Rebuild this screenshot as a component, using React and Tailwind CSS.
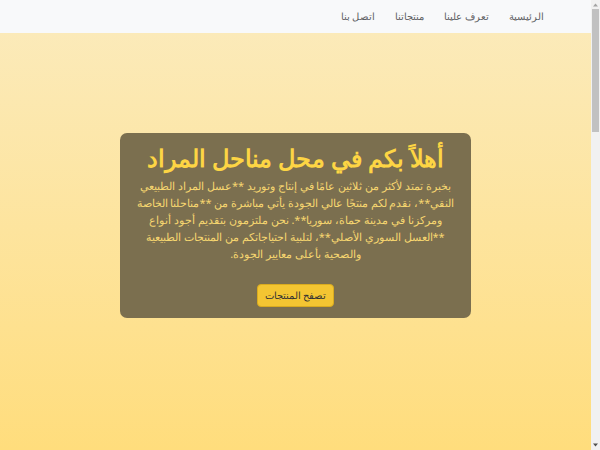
const links = ["الرئيسية", "تعرف علينا", "منتجاتنا", "اتصل بنا"];

const intro = [
  "بخبرة تمتد لأكثر من ثلاثين عامًا في إنتاج وتوريد **عسل المراد الطبيعي",
  "النقي**، نقدم لكم منتجًا عالي الجودة يأتي مباشرة من **مناحلنا الخاصة",
  "ومركزنا في مدينة حماة، سوريا**. نحن ملتزمون بتقديم أجود أنواع",
  "**العسل السوري الأصلي**، لتلبية احتياجاتكم من المنتجات الطبيعية",
  "والصحية بأعلى معايير الجودة.",
];

function Navbar() {
  return (
    <nav className="sticky top-0 z-10 h-[33px] bg-[#f8f9fa]">
      <ul className="flex h-full items-center gap-[20px] pr-[47px] text-[10px] text-[#5f6164]">
        {links.map((l) => (
          <li key={l}>
            <a href="#" className="block">{l}</a>
          </li>
        ))}
      </ul>
    </nav>
  );
}

// drawn scrollbar (the browser one is hidden in headless shots)
function Scrollbar() {
  return (
    <aside className="flex h-screen w-[9px] shrink-0 flex-col items-center bg-[#f1f1f1]">
      <svg width="7" height="8" viewBox="0 0 7 8" className="mt-[1px] shrink-0">
        <path d="M3.5 2.5 L6 5.5 L1 5.5 Z" fill="#a3a3a3" />
      </svg>
      <div className="h-[123px] w-[7px] shrink-0 bg-[#c1c1c1]" />
      <div className="flex-1" />
      <svg width="7" height="8" viewBox="0 0 7 8" className="mb-[1px] shrink-0">
        <path d="M3.5 5.5 L6 2.5 L1 2.5 Z" fill="#505050" />
      </svg>
    </aside>
  );
}

export default function App() {
  return (
    <div className="flex h-screen overflow-hidden">
      <main
        dir="rtl"
        className="h-screen flex-1 overflow-y-auto [scrollbar-width:none] font-['Noto_Sans',sans-serif]"
      >
        <Navbar />

        {/* Hero */}
        <section className="-mt-[33px] flex h-screen items-center justify-center bg-gradient-to-b from-[#fbebbd] to-[#ffdd7c]">
          <div className="w-[351px] rounded-[7px] bg-[#7b6f4f] px-[16px] pt-[7px] pb-[11px] text-center">
            <h1 className="text-[23.5px] font-bold leading-[36px] text-[#fdd544]">
              أهلاً بكم في محل مناحل المراد
            </h1>
            <p className="mt-[1px] text-[11px] leading-[17px] text-[#f6d66f]">
              {intro.map((line) => (
                <span key={line} className="block whitespace-nowrap">{line}</span>
              ))}
            </p>
            <button className="mt-[22px] rounded-[4px] border border-[#d9ab1f] bg-[#f3c532] px-[7px] py-[3px] text-[9.5px] leading-[15px] text-[#333]">
              تصفح المنتجات
            </button>
          </div>
        </section>

        {/* Below the fold */}
        <section className="h-[1086px] bg-[#fff8e1]" />
      </main>
      <Scrollbar />
    </div>
  );
}
